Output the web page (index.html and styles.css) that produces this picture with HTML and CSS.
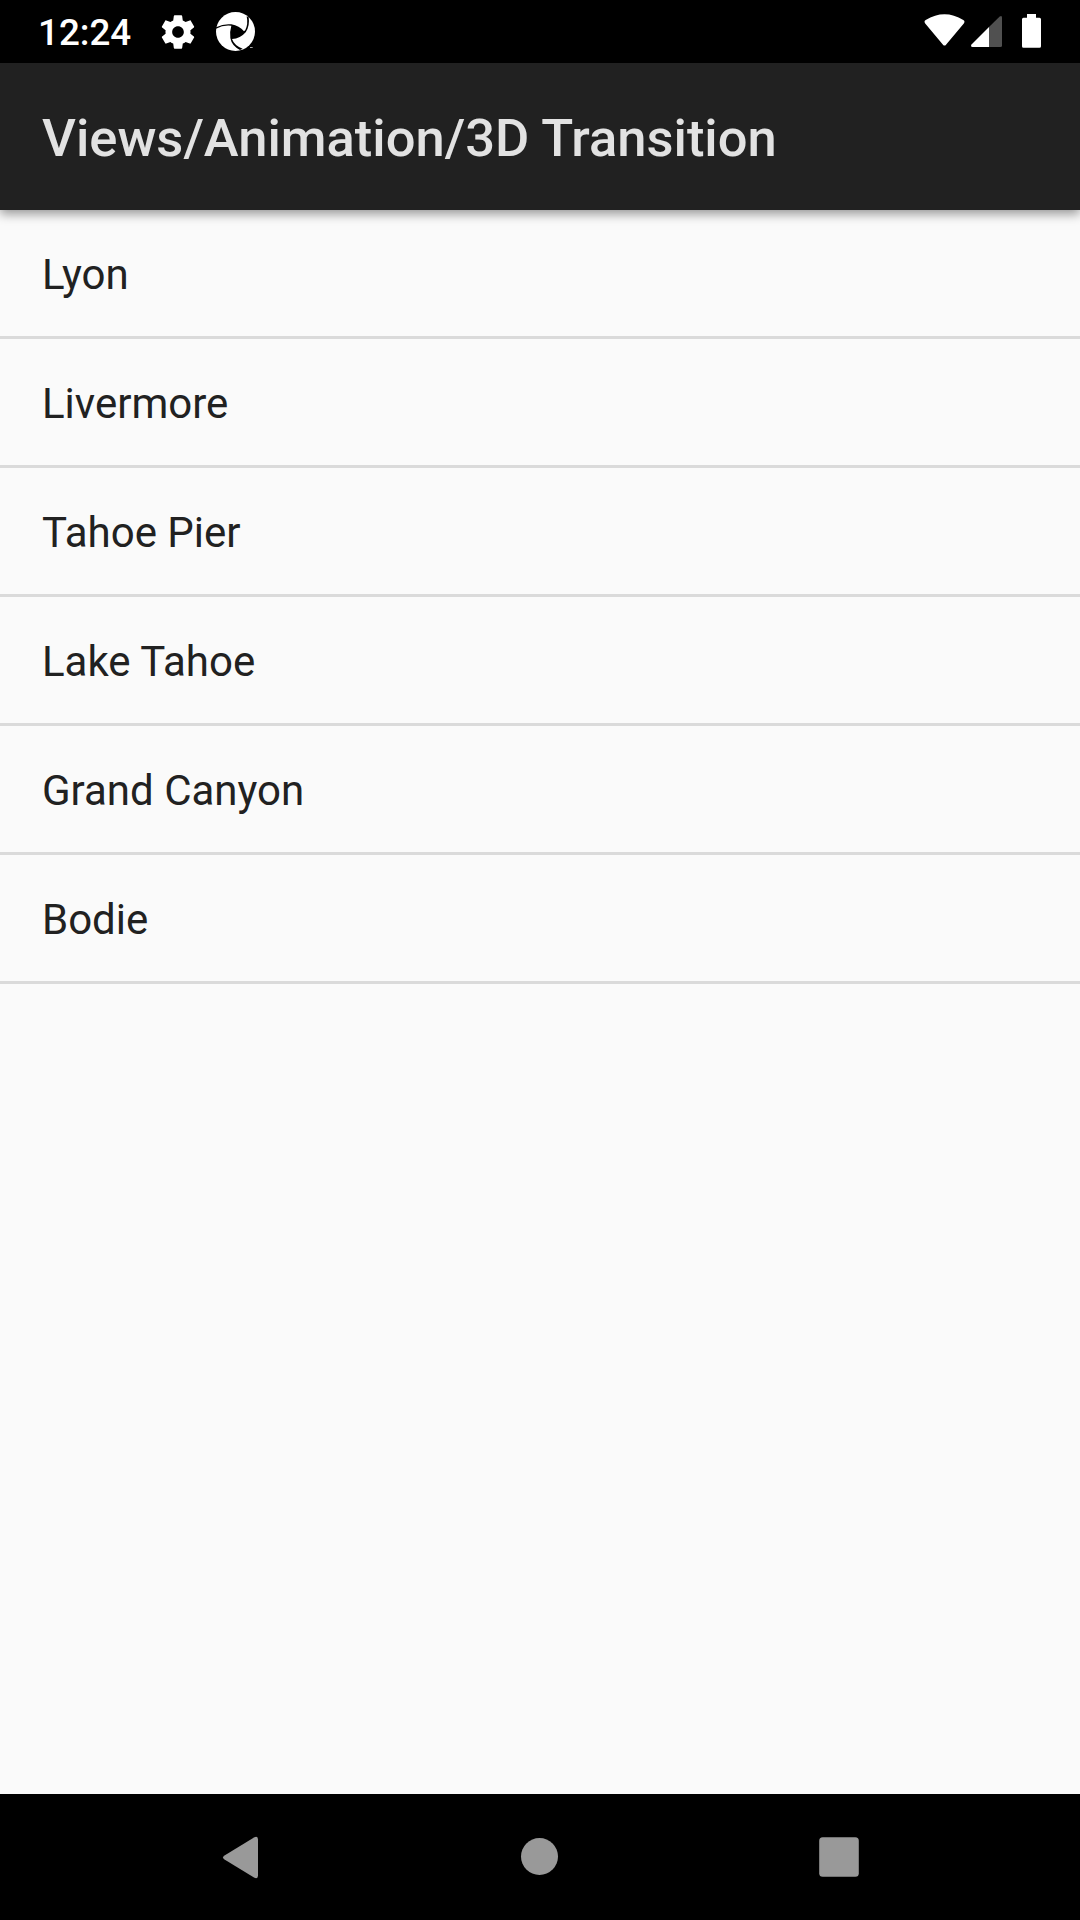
FILE: index.html
```html
<!DOCTYPE html>
<html lang="en">
<head>
<meta charset="utf-8">
<title>Views/Animation/3D Transition</title>
<link rel="stylesheet" href="styles.css">
</head>
<body>
<div class="screen">
  <header class="status-bar">
    <span class="clock">12:24</span>
    <svg class="gear" viewBox="0 0 24 24"><path d="M19.43 12.98c.04-.32.07-.64.07-.98s-.03-.66-.07-.98l2.11-1.65c.19-.15.24-.42.12-.64l-2-3.46c-.12-.22-.39-.3-.61-.22l-2.49 1c-.52-.4-1.08-.73-1.69-.98l-.38-2.65C14.46 2.18 14.25 2 14 2h-4c-.25 0-.46.18-.49.42l-.38 2.65c-.61.25-1.17.59-1.69.98l-2.49-1c-.23-.09-.49 0-.61.22l-2 3.46c-.13.22-.07.49.12.64l2.11 1.65c-.04.32-.07.65-.07.98s.03.66.07.98l-2.11 1.65c-.19.15-.24.42-.12.64l2 3.46c.12.22.39.3.61.22l2.49-1c.52.4 1.08.73 1.69.98l.38 2.65c.03.24.24.42.49.42h4c.25 0 .46-.18.49-.42l.38-2.65c.61-.25 1.17-.59 1.69-.98l2.49 1c.23.09.49 0 .61-.22l2-3.46c.12-.22.07-.49-.12-.64l-2.11-1.65zM12 15.5c-1.93 0-3.5-1.57-3.5-3.5s1.57-3.5 3.5-3.5 3.5 1.57 3.5 3.5-1.57 3.5-3.5 3.5z"/></svg>
    <svg class="aperture" viewBox="0 0 117 117">
      <circle cx="58.500" cy="58.500" r="58.500" fill="#fff"/>
      <path fill="#000" d="M0 46Q24 34 46 37Q70 42 84 58L88 54Q97 36 92 13L98 16Q102 42 89 61Q73 80 48 81Q55 101 80 110L72 114Q47 101 43 78Q41 57 46 41Q22 38 0 50Z"/>
      <path fill="#fff" d="M102 106h8v2h-8z"/>
    </svg>
    <svg class="signals" viewBox="924 0 118 63">
      <path fill="#fff" d="M925.200 23.400Q923.600 21.500 925.700 20.100Q944.500 8.500 963.300 20.100Q965.400 21.500 963.800 23.400L946 44.700Q944.500 46.500 943 44.700Z"/>
      <path fill="#505050" d="M989 27L999.700 16.500Q1002 15 1002 17.500V45.500Q1002 47 1000.500 47H989Z"/>
      <path fill="#fff" d="M989 27V47H972.500Q970.200 46.500 971.500 44.500Z"/>
      <path fill="#fff" d="M1027 14H1036V17.700H1039.500Q1041 17.700 1041 19.200V46.300Q1041 47.800 1039.500 47.800H1023.500Q1022 47.800 1022 46.300V19.200Q1022 17.700 1023.500 17.700H1027Z"/>
    </svg>
  </header>
  <div class="app-bar"><h1 class="title">Views/Animation/3D Transition</h1></div>
  <main class="content">
    <ul class="list">
      <li class="row">Lyon</li>
      <li class="row">Livermore</li>
      <li class="row">Tahoe Pier</li>
      <li class="row">Lake Tahoe</li>
      <li class="row">Grand Canyon</li>
      <li class="row">Bodie</li>
    </ul>
  </main>
  <nav class="nav-bar">
    <svg class="nav-icon" viewBox="0 0 60 60"><path d="M13.500 32.500Q10.500 30.500 13.500 28.500L43 10.500Q47 8.500 47 12.500V48.500Q47 52.500 43 50.500Z"/></svg>
    <svg class="nav-icon" viewBox="0 0 60 60"><circle cx="29.500" cy="29.500" r="18.500"/></svg>
    <svg class="nav-icon" viewBox="0 0 60 60"><rect x="10.200" y="10.200" width="39.600" height="39.600" rx="3.500"/></svg>
  </nav>
</div>
</body>
</html>
```
FILE: styles.css
```css
* {
  box-sizing: border-box;
}

body {
  margin: 0;
  font-family: Roboto, "Liberation Sans", sans-serif;
  background: #fafafa;
}

.screen {
  display: flex;
  flex-direction: column;
  width: 1080px;
  height: 1920px;
  overflow: hidden;
}

.status-bar {
  flex: none;
  display: flex;
  align-items: center;
  height: 63px;
  padding: 0 38px;
  background: #000;
  color: #fff;
}

.clock {
  width: 120px;
  padding-top: 3px;
  font-size: 36.75px;
  font-weight: 500;
  line-height: 60px;
}

.gear {
  width: 40px;
  height: 40px;
  fill: #fff;
}

.aperture {
  width: 39px;
  height: 39px;
  margin-left: 18px;
}

.signals {
  width: 118px;
  height: 63px;
  margin-left: auto;
}

.app-bar {
  flex: none;
  z-index: 1;
  display: flex;
  align-items: center;
  height: 147px;
  padding: 2px 42px 0;
  background: #212121;
  box-shadow: 0 4px 10px rgba(0, 0, 0, 0.4);
}

.title {
  margin: 0;
  color: #e2e2e2;
  font-size: 52.5px;
  font-weight: 500;
  line-height: 62px;
}

.content {
  flex: 1;
  background: #fafafa;
}

.list {
  margin: 0;
  padding: 0;
  list-style: none;
}

.row {
  display: flex;
  align-items: center;
  height: 129px;
  padding: 2px 42px 0;
  border-bottom: 3px solid #dadada;
  color: #212121;
  font-size: 42px;
}

.nav-bar {
  flex: none;
  display: flex;
  justify-content: center;
  align-items: center;
  gap: 239px;
  height: 126px;
  background: #000;
}

.nav-icon {
  width: 60px;
  height: 60px;
  fill: #999;
}
```
